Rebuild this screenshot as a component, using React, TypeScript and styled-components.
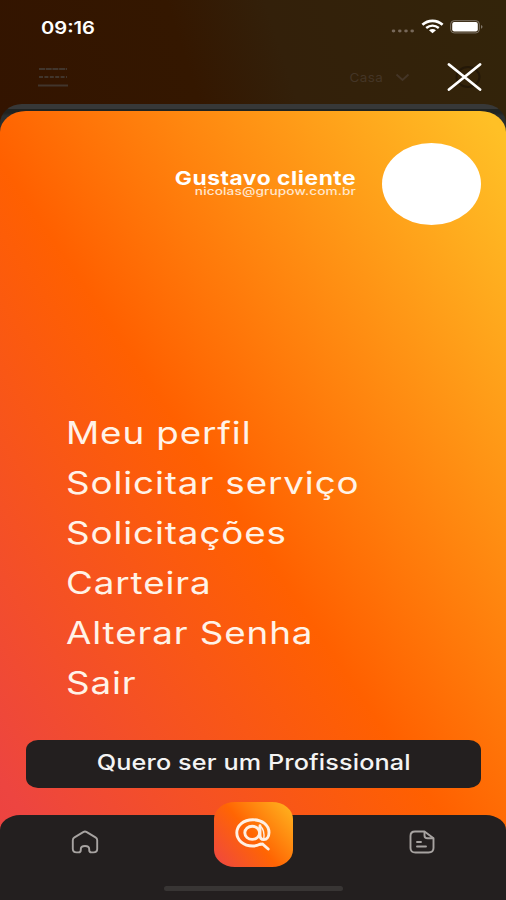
import React from "react";
import styled, { createGlobalStyle } from "styled-components";

const GlobalStyle = createGlobalStyle`
  * { box-sizing: border-box; }
  body { margin: 0; background: #231f20; }
`;

const Screen = styled.div`
  width: 506px;
  height: 900px;
  overflow: hidden;
  display: flex;
  flex-direction: column;
  font-family: Inter, "Liberation Sans", sans-serif;
  color: #fff;
  background: linear-gradient(72deg, #331400 0%, #341700 38%, #33200a 56%, #33240a 100%) 0 0 / 506px 130px no-repeat;
`;

const StatusBar = styled.header`
  height: 54px;
  padding: 0 23px 0 41px;
  display: flex;
  justify-content: space-between;
  align-items: center;
`;

/* Wide lettering: glyphs are widened around the chosen edge. */
const Wide = styled.span<{ $size: number; $weight?: number; $scale: number; $origin?: string; $spacing?: number }>`
  display: block;
  white-space: nowrap;
  font-size: ${(p) => p.$size}px;
  font-weight: ${(p) => p.$weight ?? 400};
  letter-spacing: ${(p) => p.$spacing ?? 0}px;
  transform: scaleX(${(p) => p.$scale});
  transform-origin: ${(p) => p.$origin ?? "left"} center;
`;

const StatusIcons = styled.div`
  display: flex;
  align-items: center;
  gap: 6px;
`;

const TopBar = styled.div`
  height: 50px;
  padding: 0 24px 4px 37px;
  display: flex;
  align-items: center;
`;

const Location = styled.div`
  margin-left: auto;
  margin-right: 37px;
  display: flex;
  align-items: center;
  gap: 12px;
  color: #443526;
`;

const Backdrop = styled.div`
  flex: 1;
  display: flex;
  flex-direction: column;
  padding-top: 7px;
  border-radius: 22px 22px 0 0 / 20px 20px 0 0;
  background: linear-gradient(#373838 0 5px, #202321 5px 9px, #2b2f2f 12px);
`;

const Panel = styled.main`
  flex: 1;
  display: flex;
  flex-direction: column;
  border-radius: 26px 26px 0 0 / 21px 21px 0 0;
  background: linear-gradient(56deg, #eb4141 0%, #ed4540 8%, #ff6000 48%, #ffc026 98%);
`;

const Profile = styled.section`
  display: flex;
  justify-content: flex-end;
  padding: 32px 25px 0 0;
  gap: 26px;
`;

const ProfileText = styled.div`
  display: flex;
  flex-direction: column;
  align-items: flex-end;
  padding-top: 27px;
  line-height: 18px;
`;

const Email = styled.div`
  line-height: 12px;
  margin-top: -3px;
  color: #ffe6cd;
`;

const Avatar = styled.div`
  width: 99px;
  height: 82px;
  border-radius: 50%;
  background: #fff;
`;

const Menu = styled.nav`
  margin-top: 183px;
  padding-left: 66px;
`;

const MenuItem = styled.a`
  display: block;
  height: 50px;
  line-height: 50px;
  color: #fff3e8;
`;

const ProButton = styled.button`
  margin: 32px 25px 0 26px;
  height: 48px;
  border: 0;
  padding: 0 0 4px;
  border-radius: 12px / 10px;
  background: #231f1f;
  color: #f4f4f4;
  font-family: inherit;
  display: flex;
  justify-content: center;
  align-items: center;
`;

const TabBar = styled.footer`
  margin-top: auto;
  height: 85px;
  border-radius: 20px 20px 0 0 / 15px 15px 0 0;
  background: #231f1f;
  display: grid;
  grid-template-columns: 169px 168px 169px;
  grid-template-rows: 54px 1fr;
  justify-items: center;
  align-items: center;
`;

const SearchTab = styled.div`
  width: 79px;
  height: 65px;
  margin-top: -16px;
  border-radius: 21px / 17px;
  background: linear-gradient(50deg, #ef4740 3%, #ff6503 48%, #ffb51f 98%);
  display: flex;
  align-items: center;
  justify-content: center;
`;

const HomeIndicator = styled.div`
  grid-column: 1 / -1;
  width: 179px;
  height: 5px;
  border-radius: 3px;
  margin-bottom: 9px;
  align-self: end;
  background: #383534;
`;

const items = ["Meu perfil", "Solicitar serviço", "Solicitações", "Carteira", "Alterar Senha", "Sair"];

const SignalDots = () => (
  <svg width="24" height="14" viewBox="0 0 24 14" fill="#77685a">
    {[2.5, 8.8, 15, 21.2].map((x) => <ellipse key={x} cx={x} cy="11" rx="1.8" ry="1.4" />)}
  </svg>
);

const Wifi = () => (
  <svg width="23" height="16" viewBox="0 0 23 16" fill="none" stroke="#fff">
    <path d="M1.4 5.8C7.2 .6 15.8 .6 21.6 5.8" strokeWidth="2.7" />
    <path d="M5.2 8.9C9 5.9 14 5.9 17.8 8.9" strokeWidth="2.5" />
    <path d="M8 11.3C10.2 9.6 12.8 9.6 15 11.3L11.5 14.3Z" fill="#fff" stroke="none" />
  </svg>
);

const Battery = () => (
  <svg width="33" height="14" viewBox="0 0 33 14">
    <rect x=".7" y=".7" width="28.6" height="12.2" rx="3.4" fill="none" stroke="#81776a" />
    <rect x="2.2" y="2" width="25.6" height="9.6" rx="2" fill="#fff" />
    <path d="M31 5C33 5.7 33 8 31 8.7Z" fill="#81776a" />
  </svg>
);

export default function App() {
  return (
    <>
      <GlobalStyle />
      <Screen>
        <StatusBar>
          <Wide $size={17.5} $weight={600} $scale={1.15}>09:16</Wide>
          <StatusIcons>
            <SignalDots />
            <Wifi />
            <Battery />
          </StatusIcons>
        </StatusBar>
        <TopBar>
          <svg width="32" height="22" viewBox="0 0 32 22" fill="none" stroke="#41352c" strokeWidth="2">
            <path d="M2 3H30" strokeDasharray="6 .7" />
            <path d="M2 11H30" strokeDasharray="4 1.4" />
            <path d="M1 19.5H31" />
          </svg>
          <Location>
            <Wide $size={12} $scale={1.12} $origin="right" $spacing={0.4}>Casa</Wide>
            <svg width="15" height="9" viewBox="0 0 15 9" fill="none" stroke="currentColor" strokeWidth="2">
              <path d="M1.5 1.5L7.5 7L13.5 1.5" />
            </svg>
          </Location>
          <svg width="35" height="28" viewBox="0 0 35 28" fill="none">
            <ellipse cx="21" cy="14" rx="11.5" ry="10" stroke="#241808" strokeWidth="2" />
            <path d="M2 1.5L33 26.5M33 1.5L2 26.5" stroke="#fff" strokeWidth="2.8" strokeLinecap="round" />
          </svg>
        </TopBar>
        <Backdrop>
          <Panel>
            <Profile>
              <ProfileText>
                <Wide $size={19} $weight={700} $scale={1.2} $spacing={0.45} $origin="right">Gustavo cliente</Wide>
                <Email>
                  <Wide $size={11} $weight={500} $scale={1.24} $spacing={0.1} $origin="right">nicolas@grupow.com.br</Wide>
                </Email>
              </ProfileText>
              <Avatar />
            </Profile>
            <Menu>
              {items.map((label) => (
                <MenuItem key={label}>
                  <Wide $size={30.5} $scale={1.205} $spacing={0.75}>{label}</Wide>
                </MenuItem>
              ))}
            </Menu>
            <ProButton>
              <Wide $size={21} $weight={500} $scale={1.2} $spacing={0.1} $origin="center">Quero ser um Profissional</Wide>
            </ProButton>
            <TabBar>
              <svg width="28" height="24" viewBox="0 0 28 24" fill="none" stroke="#a7a3a1" strokeWidth="1.9" strokeLinejoin="round">
                <path d="M12.2 2.1Q14 1 15.8 2.1L24.5 7.4Q26.2 8.4 26.2 10.2V19Q26.2 22.4 22.5 22.4H20.5Q18.2 22.4 18.2 20V19Q18.2 16 14 16Q9.8 16 9.8 19V20Q9.8 22.4 7.5 22.4H5.5Q1.8 22.4 1.8 19V10.2Q1.8 8.4 3.5 7.4Z" />
              </svg>
              <SearchTab>
                <svg width="38" height="34" viewBox="0 0 38 34" fill="none" stroke="#fff0e4" strokeWidth="2.9" strokeLinecap="round">
                  <path d="M26 27.2Q22.5 29 18.8 29C9.3 29 2.8 23 2.8 15.8S9.3 2.7 18.8 2.7S35 8.2 35 15.5C35 19.8 32.8 22.6 29.8 22.6S26 20.5 26 18V8.8" />
                  <ellipse cx="18.2" cy="15.8" rx="7.4" ry="6.6" />
                  <path d="M26 8.8C29.5 11.5 30.6 15.5 29.8 22.2" strokeWidth="1.4" />
                  <path d="M26 27.2L28.5 27L34.2 32" />
                </svg>
              </SearchTab>
              <svg width="26" height="24" viewBox="0 0 26 24" fill="none" stroke="#a7a3a1" strokeWidth="1.9" strokeLinejoin="round" strokeLinecap="round">
                <path d="M6 1.5H15.5L24.5 8.3V18Q24.5 22.5 19.5 22.5H6.5Q1.5 22.5 1.5 18V6Q1.5 1.5 6 1.5Z" />
                <path d="M15.5 2V5.5Q15.5 8.3 18.5 8.3H24M8 12H12M8 16.5H17" />
              </svg>
              <HomeIndicator />
            </TabBar>
          </Panel>
        </Backdrop>
      </Screen>
    </>
  );
}
